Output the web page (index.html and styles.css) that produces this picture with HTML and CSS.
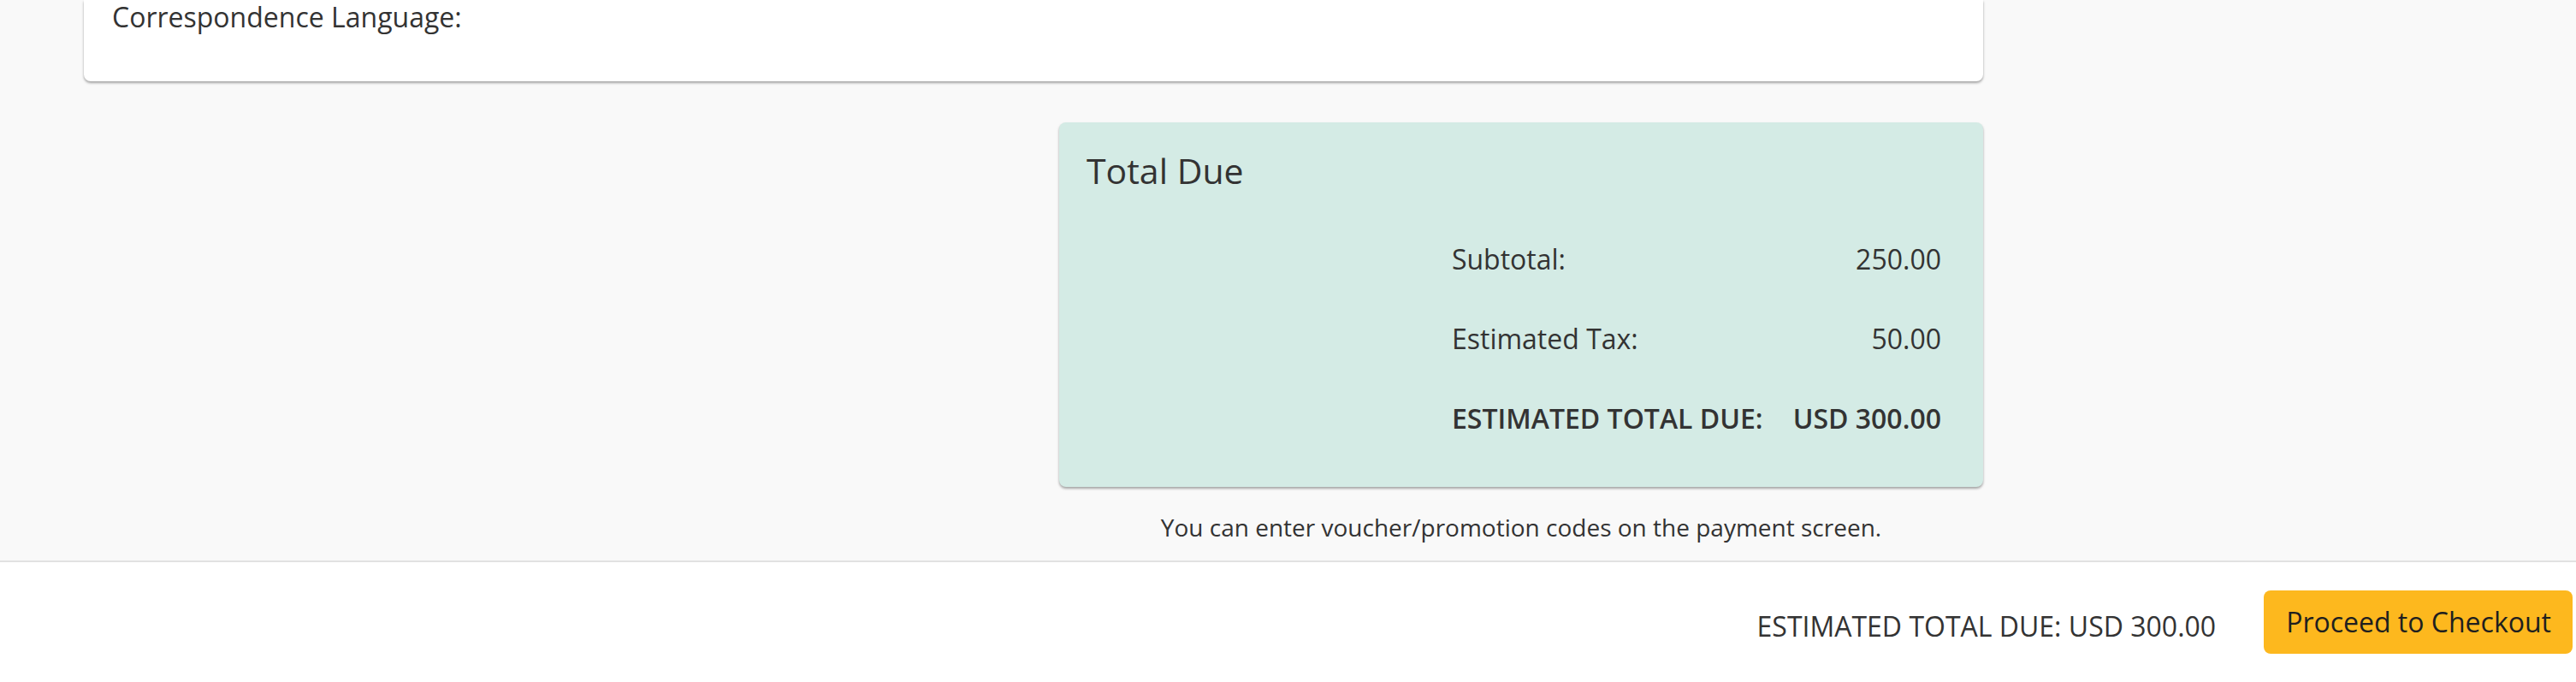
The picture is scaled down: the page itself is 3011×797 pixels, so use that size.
FILE: index.html
```html
<!DOCTYPE html>
<html lang="en">
<head>
<meta charset="utf-8">
<title>Order Summary</title>
<link rel="stylesheet" href="styles.css">
</head>
<body>
  <main class="content">
    <section class="card info-card">
      <div class="field">Correspondence Language:</div>
    </section>
    <div class="summary-col">
      <section class="card total-card">
        <h2 class="total-title">Total Due</h2>
        <div class="totals">
          <div class="t-label">Subtotal:</div>
          <div class="t-value">250.00</div>
          <div class="t-label">Estimated Tax:</div>
          <div class="t-value">50.00</div>
          <div class="t-label strong">ESTIMATED TOTAL DUE:</div>
          <div class="t-value strong">USD 300.00</div>
        </div>
      </section>
      <p class="voucher-note">You can enter voucher/promotion codes on the payment screen.</p>
    </div>
  </main>
  <footer class="footer">
    <span class="footer-total">ESTIMATED TOTAL DUE: USD 300.00</span>
    <button class="btn-checkout" type="button">Proceed to Checkout</button>
  </footer>
</body>
</html>
```
FILE: styles.css
```css
html, body {
  margin: 0;
  padding: 0;
}

body {
  background: #f9f9f9;
  color: #333333;
  font-family: "Open Sans", "Noto Sans", sans-serif;
  font-size: 32px;
  line-height: 48px;
  overflow: hidden;
}

.content {
  display: grid;
  grid-template-columns: 1080px 1080px;
  column-gap: 60px;
  row-gap: 48px;
  padding: 0 0 18px 98px;
  width: 2220px;
}

.card {
  border-radius: 0 0 8px 8px;
  box-shadow: 0 2px 3px rgba(0, 0, 0, 0.35);
}

.info-card {
  grid-column: 1 / span 2;
  background: #ffffff;
  padding: 0 32px 55px 33px;
}

.field {
  line-height: 40px;
}

.summary-col {
  grid-column: 2;
  display: flex;
  flex-direction: column;
}

.total-card {
  background: #d4ebe5;
  border-radius: 8px;
  padding: 32px 32px 34px 32px;
}

.total-title {
  margin: 0 0 33px 0;
  font-size: 41px;
  font-weight: 400;
  line-height: 48px;
}

.totals {
  display: grid;
  grid-template-columns: auto auto;
  justify-content: end;
  column-gap: 35px;
  padding-right: 17px;
}

.t-label,
.t-value {
  padding: 22.5px 0;
}

.t-value {
  text-align: right;
}

.strong {
  font-weight: 600;
}

.voucher-note {
  margin: 26px 0 0 0;
  font-size: 28px;
  line-height: 42px;
  text-align: center;
}

.footer {
  display: flex;
  justify-content: flex-end;
  align-items: center;
  gap: 56px;
  height: 140px;
  padding-right: 4px;
  background: #ffffff;
  border-top: 2px solid #e2e2e2;
}

.footer-total {
  padding-top: 10px;
}

.btn-checkout {
  font-family: inherit;
  font-size: 32px;
  line-height: 48px;
  color: #1f1f1f;
  background: #fdb81e;
  border: none;
  border-radius: 8px;
  padding: 13px 25px 13px 26px;
  cursor: pointer;
}
```
